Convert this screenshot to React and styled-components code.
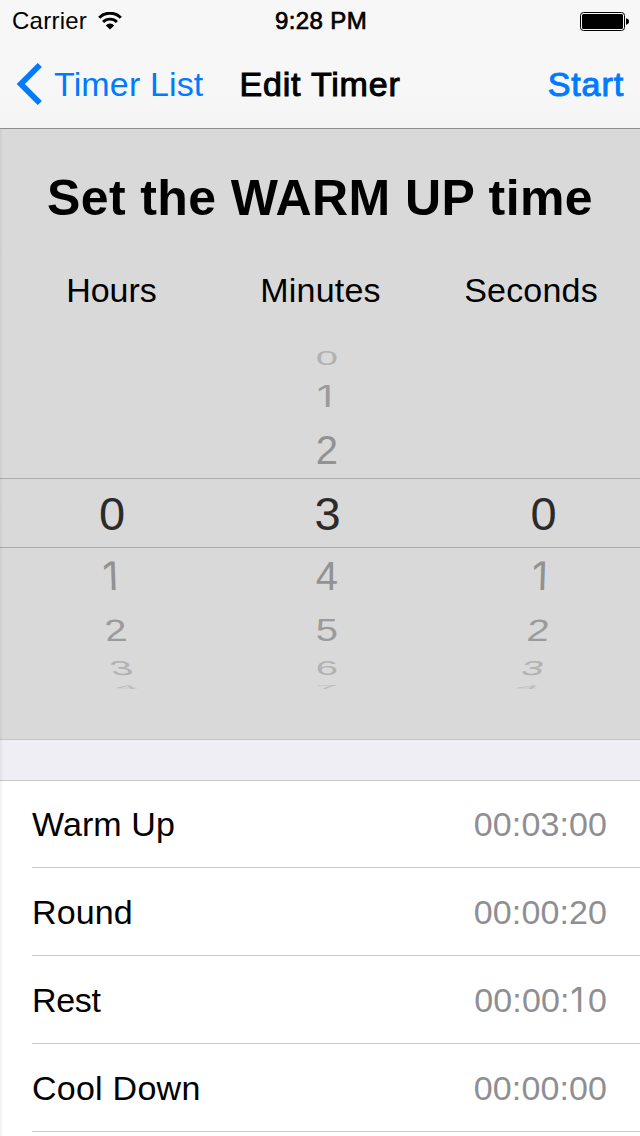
import React from "react";
import styled, { createGlobalStyle } from "styled-components";

const GlobalStyle = createGlobalStyle`
  * { box-sizing: border-box; }
  body {
    margin: 0;
    background: #fff;
    font-family: "Liberation Sans", Arial, sans-serif;
    font-size: 34px;
    color: #000;
  }
`;

const Screen = styled.main`
  position: relative;
  display: flex;
  flex-direction: column;
  width: 640px;
  height: 1136px;
  overflow: hidden;
  background: #fff;
`;

const EdgeShadow = styled.div`
  position: absolute;
  top: 129px;
  bottom: 0;
  left: 0;
  width: 3px;
  background: linear-gradient(to right, rgba(0, 0, 0, 0.06), rgba(0, 0, 0, 0));
`;

const Header = styled.header`
  flex: none;
  height: 129px;
  background: linear-gradient(#f7f7f7 70%, #f4f4f4);
  border-bottom: 1px solid #8e8e8e;
`;

const Bar = styled.div`
  display: grid;
  grid-template-columns: 1fr auto 1fr;
  align-items: center;
  height: ${(p) => p.$height}px;
  padding: ${(p) => p.$padding};
`;

const Side = styled.div`
  display: flex;
  align-items: center;
  gap: ${(p) => p.$gap || 0}px;
  justify-content: ${(p) => (p.$end ? "flex-end" : "flex-start")};
`;

const Text = styled.span`
  font-size: ${(p) => p.$size || 34}px;
  line-height: 40px;
  letter-spacing: ${(p) => p.$track || 0}px;
  color: ${(p) => p.$color || "inherit"};
  -webkit-text-stroke: ${(p) => (p.$medium ? `${p.$medium}px currentColor` : "0")};
  white-space: nowrap;
`;

const TimerPanel = styled.section`
  flex: none;
  height: 611px;
  padding-top: 40px;
  background: #d9d9d9;
  border-bottom: 1px solid #c4c4c8;
  overflow: hidden;
`;

const Heading = styled.h1`
  margin: 0;
  font-size: 50px;
  line-height: 58px;
  font-weight: 700;
  letter-spacing: 0.4px;
  text-align: center;
  white-space: nowrap;
`;

const Units = styled.div`
  display: grid;
  grid-template-columns: 223px 195px 226px;
  margin-top: 43px;
  text-align: center;
`;

const Picker = styled.div`
  display: grid;
  grid-template-columns: 224px 207px 225px;
  margin-top: 22px;
  width: 656px;
  background: linear-gradient(#acacac, #acacac) 0 146px / 100% 1px no-repeat,
    linear-gradient(#acacac, #acacac) 0 215px / 100% 1px no-repeat;
`;

const Wheel = styled.div`
  display: flex;
  flex-direction: column;
`;

const Digit = styled.div`
  display: flex;
  align-items: center;
  justify-content: center;
  height: ${(p) => p.$h}px;
  font-size: ${(p) => p.$size}px;
  line-height: 1;
  color: ${(p) => p.$color};
  transform: translateX(${(p) => p.$shift}px) skewX(${(p) => p.$skew}deg) scale(${(p) => p.$sx}, ${(p) => p.$sy});
`;

/* A plain numeral one, without a foot, set in the width of the other digits. */
const One = styled.span`
  display: inline-block;
  width: 0.556em;
  font-family: Inter, sans-serif;
  font-size: 0.98em;
  line-height: 1;
  letter-spacing: 0;
  text-align: center;
  text-indent: -0.09em;
`;

const Gap = styled.div`
  flex: none;
  height: 40px;
  background: #efeef4;
`;

const List = styled.ul`
  margin: 0;
  padding: 0;
  list-style: none;
  border-top: 1px solid #c8c7cc;
`;

const Row = styled.li`
  display: flex;
  align-items: center;
  justify-content: space-between;
  height: ${(p) => (p.$first ? 87 : 88)}px;
  margin-left: 32px;
  padding-right: 33px;
  border-bottom: 1px solid #c8c7cc;
`;

const slots = [
  { at: -4, h: 14, size: 40, sx: 1, sy: 0.13, color: "#c0c0c0", shift: 0, skew: 0 },
  { at: -3, h: 24, size: 40, sx: 1, sy: 0.5, color: "#b2b2b2", shift: 0, skew: 0 },
  { at: -2, h: 52, size: 40, sx: 1, sy: 0.77, color: "#9b9b9b", shift: 0, skew: 0 },
  { at: -1, h: 56, size: 40, sx: 1, sy: 1, color: "#929292", shift: 0, skew: 0 },
  { at: 0, h: 70, size: 47, sx: 1, sy: 1, color: "#2b2b2b", shift: 0, skew: 0 },
  { at: 1, h: 56, size: 40, sx: 1, sy: 1, color: "#929292", shift: 1, skew: 2 },
  { at: 2, h: 52, size: 40, sx: 1, sy: 0.77, color: "#9b9b9b", shift: 4.5, skew: 6 },
  { at: 3, h: 24, size: 40, sx: 1, sy: 0.5, color: "#b2b2b2", shift: 10, skew: 16 },
  { at: 4, h: 14, size: 40, sx: 1, sy: 0.13, color: "#bdbdbd", shift: 15, skew: 50 },
];

const wheels = [
  { name: "Hours", track: 0, value: 0, lean: 1 },
  { name: "Minutes", track: 0.2, value: 3, lean: 0 },
  { name: "Seconds", track: 0.2, value: 0, lean: -1 },
];

const rows = [
  { name: "Warm Up", time: "00:03:00", track: 0.1 },
  { name: "Round", time: "00:00:20", track: 0.1 },
  { name: "Rest", time: "00:00:10", track: -0.3 },
  { name: "Cool Down", time: "00:00:00", track: 0.25 },
];

const Numerals = ({ value }) =>
  String(value)
    .split(/(1)/)
    .map((part, i) => (part === "1" ? <One key={i}>1</One> : part));

const Wifi = () => (
  <svg width="24" height="18" viewBox="0 0 24 18" fill="none" stroke="#000">
    <path d="M1.2 5.7 A15.2 15.2 0 0 1 22.8 5.7" strokeWidth="3" />
    <path d="M5.1 10 A9.7 9.7 0 0 1 18.9 10" strokeWidth="2.9" />
    <path d="M12 17.6 L7.8 13.4 A5.8 5.8 0 0 1 16.2 13.4 Z" fill="#000" stroke="none" />
  </svg>
);

const Battery = () => (
  <svg width="50" height="19" viewBox="0 0 50 19">
    <rect x="0.5" y="0.5" width="44" height="18" rx="3" fill="none" stroke="#000" />
    <rect x="2" y="2" width="41" height="15" rx="1.5" />
    <path d="M46 6.3 C48 6.6 49 7.8 49 9.5 C49 11.2 48 12.4 46 12.7 Z" />
  </svg>
);

const BackChevron = () => (
  <svg width="26" height="42" viewBox="0 0 26 42" fill="none" stroke="#007aff" strokeWidth="5.8">
    <path d="M23.8 2 L4.8 21 L23.8 40" />
  </svg>
);

export default function App() {
  return (
    <>
      <GlobalStyle />
      <Screen>
        <Header>
          <Bar $height={40} $padding="1px 10px 0 12px">
            <Side $gap={11}>
              <Text $size={24} $track={0.25}>Carrier</Text>
              <Wifi />
            </Side>
            <Text $size={24} $medium={0.7} $track={0.4}>9:28 PM</Text>
            <Side $end>
              <Battery />
            </Side>
          </Bar>
          <Bar $height={88} $padding="0 16px">
            <Side $gap={12}>
              <BackChevron />
              <Text $color="#007aff" $track={0.15}>Timer List</Text>
            </Side>
            <Text $medium={1} $track={0.8}>Edit Timer</Text>
            <Side $end>
              <Text $color="#007aff" $medium={1} $track={0.9}>Start</Text>
            </Side>
          </Bar>
        </Header>
        <TimerPanel>
          <Heading>Set the WARM UP time</Heading>
          <Units>
            {wheels.map((w) => (
              <Text key={w.name} $track={w.track}>{w.name}</Text>
            ))}
          </Units>
          <Picker>
            {wheels.map((w) => (
              <Wheel key={w.name}>
                {slots.map((s) => (
                  <Digit
                    key={s.at}
                    $h={s.h}
                    $size={s.size}
                    $sx={s.sx}
                    $sy={s.sy}
                    $color={s.color}
                    $shift={s.shift * w.lean - (s.at === 0 ? 0 : 0.7)}
                    $skew={s.skew * w.lean}
                  >
                    {w.value + s.at >= 0 && <Numerals value={w.value + s.at} />}
                  </Digit>
                ))}
              </Wheel>
            ))}
          </Picker>
        </TimerPanel>
        <Gap />
        <List>
          {rows.map((r, i) => (
            <Row key={r.name} $first={i === 0}>
              <Text $track={r.track}>{r.name}</Text>
              <Text $color="#8e8e93" $track={0.1}>
                <Numerals value={r.time} />
              </Text>
            </Row>
          ))}
        </List>
        <EdgeShadow />
      </Screen>
    </>
  );
}
